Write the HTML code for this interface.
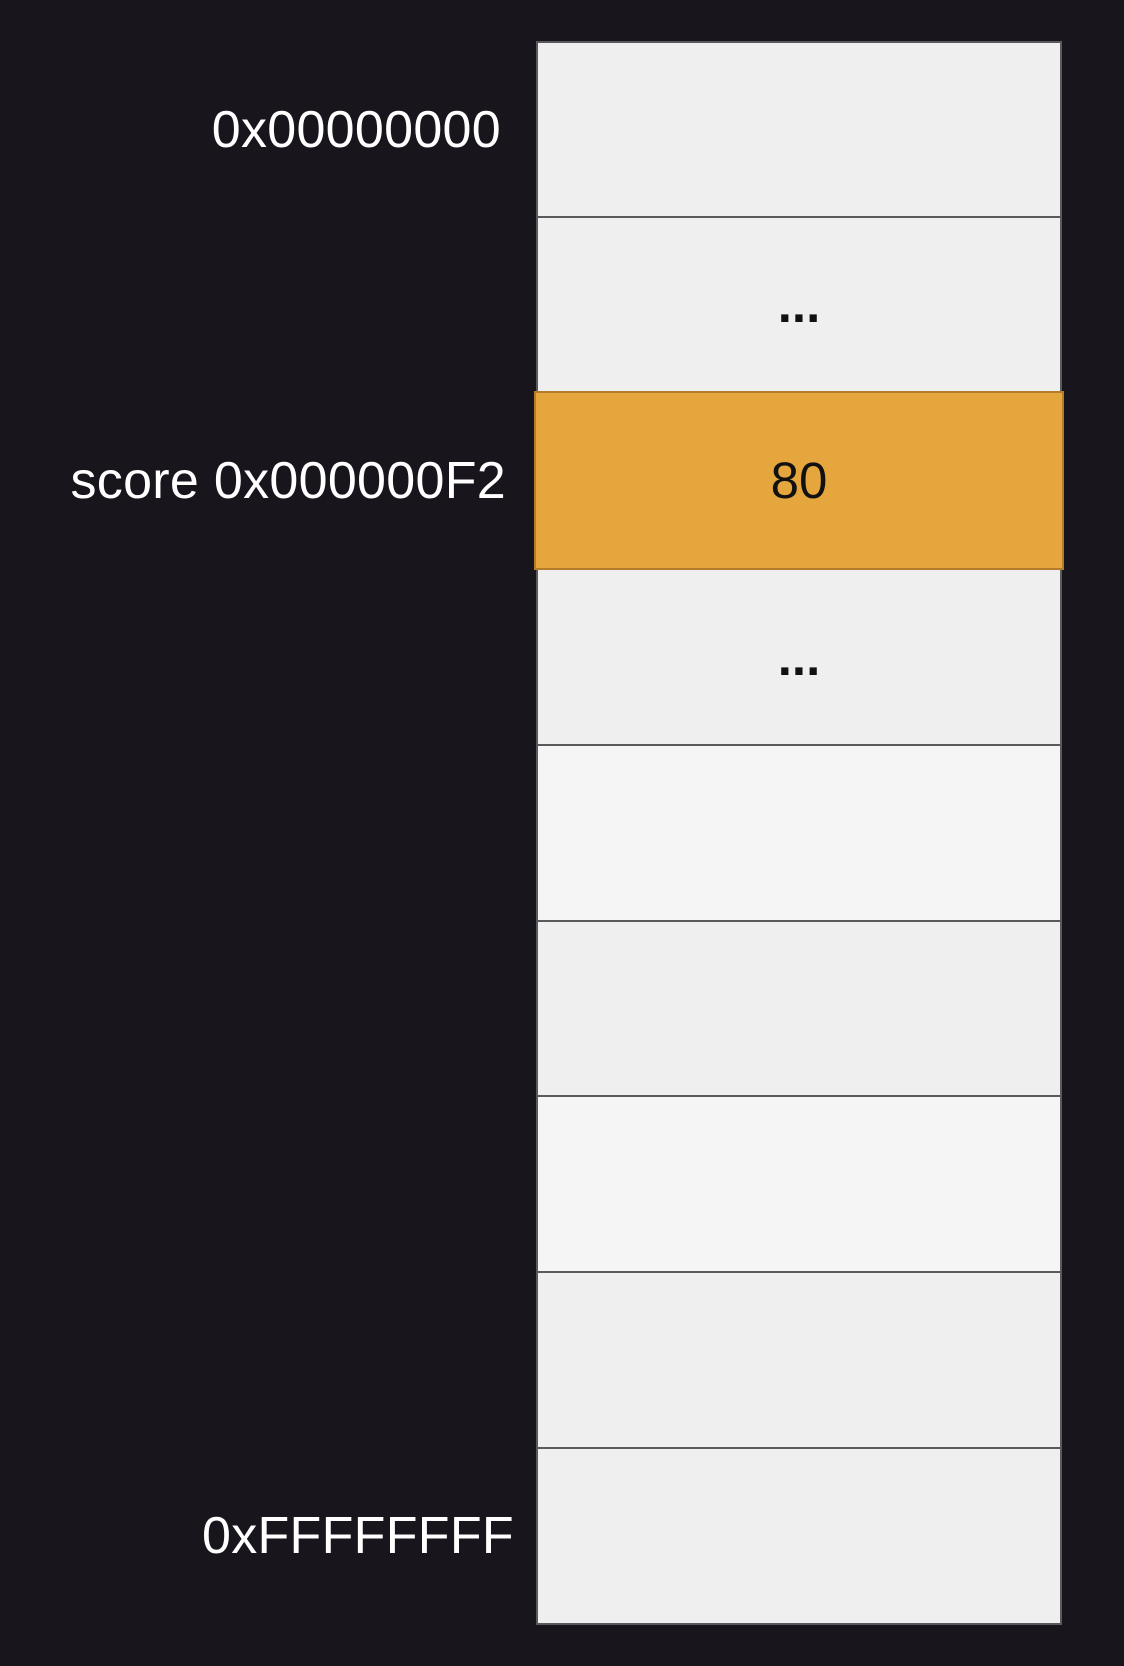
<!DOCTYPE html>
<html><head><style>
body{margin:0;width:1124px;height:1666px;background:#18151c;position:relative;overflow:hidden;font-family:"Liberation Sans",Arial,sans-serif}
.r{position:absolute;left:536px;width:526px;box-sizing:border-box;border:2px solid #5a5a5c;background:#efefef;display:flex;align-items:center;justify-content:center;font-size:51px;color:#111}
.l{position:absolute;color:#fff;font-size:52px;text-align:right;line-height:60px;letter-spacing:0.3px}
</style></head><body>
<div class="r" style="top:41px;height:177px"></div>
<div class="r" style="top:216px;height:177px;font-weight:bold">...</div>
<div class="r" style="top:568px;height:178px;font-weight:bold">...</div>
<div class="r" style="top:744px;height:178px;background:#f5f5f5"></div>
<div class="r" style="top:920px;height:177px"></div>
<div class="r" style="top:1095px;height:178px;background:#f5f5f5"></div>
<div class="r" style="top:1271px;height:178px"></div>
<div class="r" style="top:1447px;height:178px"></div>
<div class="r" style="top:391px;left:534px;width:530px;height:179px;background:#e5a63d;border-color:#b57d2b">80</div>
<div class="l" style="right:623px;top:100px">0x00000000</div>
<div class="l" style="right:618px;top:451px">score 0x000000F2</div>
<div class="l" style="right:610px;top:1506px">0xFFFFFFFF</div>
</body></html>
